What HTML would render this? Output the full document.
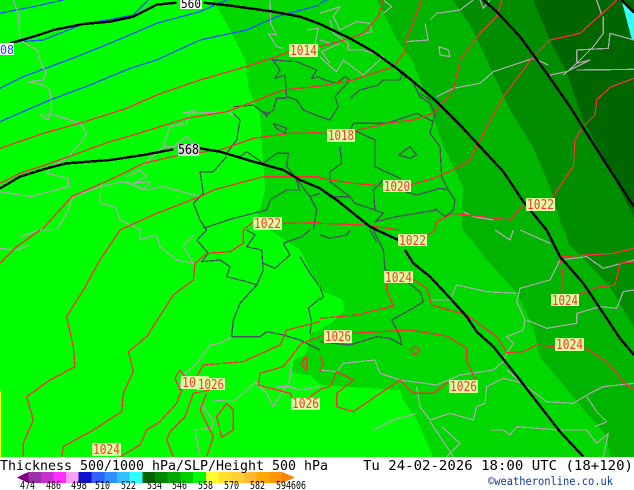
<!DOCTYPE html>
<html><head><meta charset="utf-8">
<style>
html,body{margin:0;padding:0;background:#fff}
svg{display:block;position:absolute;left:0;top:0}
.r,.b,.g,.d,.k{fill:none;vector-effect:non-scaling-stroke;stroke-linejoin:round}
.r{stroke:#ff2a3c;stroke-width:1.3}
.b{stroke:#1e50ff;stroke-width:1.3}
.g{stroke:#a8a8a8;stroke-width:1.3}
.d{stroke:#4a4f5c;stroke-width:1.3}
.k{stroke:#000;stroke-width:2.4}
text{font-family:"DejaVu Sans Mono","Liberation Mono",monospace}
.l{font-size:13px;fill:#ff3333}
</style></head>
<body>
<svg width="634" height="490" viewBox="0 0 634 490" xmlns="http://www.w3.org/2000/svg">
<rect width="634" height="490" fill="#fff"/>
<g shape-rendering="crispEdges">
<rect width="634" height="457" fill="#00ff00"/>
<path d="M0 14L15 11 45 0H0Z" fill="#00f000"/>
<path d="M213 0L230 30 245 60 249 90 260 115 263 160 265 190 258 215 270 230 300 250 320 290 343 300 344 310 335 320 320 330 310 333 308 345 305 355 294 360 292 372 305 375 310 375 320 385 400 390 403 400 417 420 433 457H634V0Z" fill="#00d800"/>
<path d="M377 0L397 40 412 60 427 97 442 143 463 187 462 227 463 230 487 260 517 293 533 327 540 357 570 393 607 437 610 457H634V0Z" fill="#00b400"/>
<path d="M453 0L473 30 490 67 510 110 533 147 550 187 562 227 565 230 568 243 610 287 634 327V0Z" fill="#008e00"/>
<path d="M533 0L550 40 567 73 583 120 610 170 634 217V0Z" fill="#006600"/>
<path d="M622 2L634 13V40H632Z" fill="#33ffff"/>
<rect x="0" y="391" width="1" height="66" fill="#ffff00"/>

<g transform="translate(0,0) scale(.33333)">
<path class="b" d="M0 40L100 20 190 0M60 125L130 120 250 72 350 55 400 45 445 0M0 265L70 230 230 170 330 130 470 70 600 35 680 0M0 365L150 300 270 255 390 205 470 180 600 120 740 90 830 50 960 15"/>
<path class="g" d="M40 0L55 40 60 120 110 150 130 205 140 215 130 240 85 245 130 255 150 270 155 320 145 360 120 345 165 345 240 370 260 400 240 430 205 470 150 505 140 520 205 535 205 560 150 575 90 590 0 575M220 590L200 640 170 690M220 590L300 560 370 545 440 570 490 560 600 590M300 580L300 610 345 620 360 660 425 690M430 495L490 440 510 380 560 370 570 340 680 335 700 345M550 338L585 332 580 340 550 340M380 530L420 510 440 530 400 550 450 545 430 570 380 545M490 440L520 440 560 410 590 440M810 0L812 70 830 105 805 100 830 140 850 145M920 90L955 85 945 130 960 150"/>
<path class="d" d="M815 175L840 210 825 235 855 225 860 290 890 300 910 330 960 350M815 180L890 185 950 210 935 235 960 230M700 320L760 315 800 345 820 330 830 295 860 295M700 340L720 360 710 420 680 460 720 470 740 455 790 490 830 460 865 460 860 500 885 530 900 570 860 570 810 600 800 630 760 640 700 655 610 685M600 515L640 515 680 470M600 515L610 580 580 610 600 660 620 690M820 370L860 385 855 400 830 385ZM790 335L805 340 800 350ZM885 530L930 590 960 580M930 590L950 630 940 690M760 655L775 665 770 690"/>
<path class="r" d="M0 445L130 400 245 368 380 325 470 285 600 240 745 198 815 175 870 155M0 550L60 520 150 490 330 425 400 405 560 355 680 335 760 305 850 270 960 258M125 690L215 590 350 530 430 490 540 465 660 450 760 415 870 400 960 398M360 690L470 640 600 590 640 570 790 530 960 530M730 690L760 665M845 670L960 668"/>
</g>

<g transform="translate(320,0) scale(.33333)">
<path class="b" d="M0 10L20 0"/>
<path class="g" d="M190 0L215 20 190 40M0 40L30 30 60 20 40 50 60 90 110 65 150 70 155 95 120 105M30 60L40 100 85 130 85 150 130 150 190 170 130 225 70 180 50 215 20 190 0 170M60 130L5 155 30 190M0 120L30 130M330 60L350 40 420 30 460 0M315 70L325 120 260 125M357 140L385 150 390 170 360 165ZM350 290L400 265 480 250 520 215 640 175 685 195M690 225L740 215 810 180 770 190 770 150 865 145 870 100 942 120M850 50L850 100 820 140 770 190 730 225M770 210L942 208M845 45L830 0M480 0L490 25 510 0M430 635L460 650 520 660"/>
<path class="d" d="M0 235L50 250 75 230 90 240 45 290 55 320 30 360 0 350M90 295L120 270 175 255 190 240 240 240 250 215 280 250 300 290 330 310 345 340 330 400 360 440 365 530 385 570 405 600 400 630 375 650 345 625M100 390L165 420 165 500 240 535 240 570 290 585 360 565 385 570M90 390L100 370 200 370 290 340 340 365M60 440L65 490 30 515 30 545 90 590 105 610 165 630 160 570 190 540M236 465L270 440 290 465 270 475ZM240 220L265 230 250 235M0 565L30 590 90 590M165 630L190 640 165 665 230 650 350 630M300 280L330 300"/>
<path class="r" d="M0 140L90 115 130 100 175 50 190 0M0 258L100 240 220 200 255 155 258 125 290 40 305 0M0 400L20 400M105 392L200 370 280 360 340 340 400 270 420 180 480 100 530 50 545 0M0 535L100 550 190 558M270 555L340 535 410 505 450 480 500 380 550 290 640 170 690 120 780 100 880 10 890 0M0 670L130 675 240 690M345 690L350 665 400 640 570 660 620 605M695 595L760 500 765 420 790 380 825 345 830 300 870 262 942 235"/>
<path class="k" d="M0 72L90 115 160 155 230 205 280 245 350 305 420 375 485 445 550 515 610 605 680 690M0 565L50 600 150 680 170 690M490 0L530 35 600 110 680 220 750 320 800 400 870 510 942 620M905 0L942 38"/>
</g>

<g transform="translate(0,230) scale(.33333)">
<path class="g" d="M0 55L50 60 90 45M60 20L120 0 160 0M50 60L0 55M420 0L420 30 470 15 480 50 530 90 580 100 550 50 580 15M700 320L660 340 630 345 590 400 545 440 540 475M640 510L700 515 770 455M875 390L870 450 820 530 800 490 770 460M600 520L640 570 635 595 585 600 600 680M830 470L870 470 900 480 960 470"/>
<path class="d" d="M590 30L620 0M590 30L625 70 605 95 660 90 690 110 680 140 740 155 770 165 790 120 785 60 740 50 765 15 740 0M770 165L720 220 700 270 695 320 780 320 800 305 850 315 900 330 960 360M790 100L825 115 870 75 850 40 905 20 930 0M900 80L930 130 955 165M960 205L925 235 935 275 930 310"/>
<path class="r" d="M0 100L50 50 120 0M360 0L300 90 250 180 200 260 220 350 225 410 150 450 80 500 100 570 70 640 70 680M730 0L730 40 690 65 620 70 585 100 580 150 520 195 440 320 385 365 400 425 370 490 365 545 280 600 190 650 185 680M525 445L540 420 555 440 560 470 540 480ZM545 480L530 520 480 575 440 600 420 645 360 680M960 275L860 300 840 345 730 395 610 405 590 440M630 480L580 490 555 560 510 605 500 630 520 680M620 490L600 540 640 620 620 680M680 520L700 540 700 600 665 622 650 560ZM910 390L920 380 920 420 905 405ZM960 320L905 340 850 410 780 430 775 465 870 490 880 510M960 480L930 500"/>
</g>

<g transform="translate(320,230) scale(.33333)">
<path class="g" d="M50 425L70 400 165 390 180 430 240 450 350 465 420 435 520 420 550 395 560 370 580 340 560 320 610 300 615 270 590 215 600 175 690 150 720 90 800 80 850 115 942 90M330 210L390 210 410 165 500 185 590 190M620 270L680 295 770 280 770 250 840 230 890 235 910 185 942 180M560 420L620 470 680 515 760 520 810 490 850 470 942 460M290 470L300 530 330 570 390 550 460 570 470 530 495 520 500 470 550 445 610 460M510 600L550 600 570 615 590 590 720 600 800 600 830 640 865 610 850 680M160 600L220 570 290 550M800 500L830 545 860 575 825 590M330 575L360 620 400 680M525 0L570 30 580 0M600 0L690 40M0 420L50 425M365 590L420 640 380 680"/>
<path class="d" d="M0 170L10 200 0 210M160 0L190 60 195 120 240 140 300 185 310 215 270 240 215 270 240 320 245 345 210 325 170 320 90 345 40 340 0 335M0 15L30 25 80 15 90 0M150 0L170 35"/>
<path class="r" d="M0 265L110 255 220 228 200 180 200 130M280 148L320 175 335 225 440 255 530 320 560 368 610 365 650 345 705 350M790 350L860 395 920 465 942 480M0 318L12 318M95 310L270 300 380 318 440 355 440 390 465 450M0 478L30 470 50 425 100 450 50 490 50 530 100 545 240 450 280 490 340 490 385 455M0 380L10 400 0 425M725 80L800 75 880 70 942 55M720 85L730 140 730 195M775 195L830 172 885 165 900 100 942 95M320 20L345 0"/>
<circle class="r" cx="285" cy="362" r="11"/>
<path class="k" d="M170 0L235 30M255 60L280 100 330 140 400 215 440 260 470 305 520 350 600 450 650 515 720 605 790 680M680 0L720 80 790 160 840 235 900 325 942 375"/>
</g>
<g transform="translate(0,0) scale(.33333)">
<path class="k" d="M30 130L100 110 160 90 250 72 330 65 400 50 470 14 530 8M610 8L700 18 820 35 900 50 960 72M0 565L60 530 140 505 200 490 330 480 430 465 520 448M600 445L660 455 760 485 850 510 900 540 960 565"/>
</g>

<rect x="180" y="0" width="22" height="9" fill="#fff"/>
<rect x="178" y="144" width="21" height="12" fill="#d8d8d8"/>
<rect x="0" y="43" width="14" height="12" fill="#fff"/>
<g fill="#d8ffa0">
<rect x="289" y="44" width="29" height="13"/>
<rect x="327" y="129" width="28" height="13"/>
<rect x="383" y="180" width="28" height="12"/>
<rect x="526" y="198" width="29" height="13"/>
<rect x="253" y="217" width="29" height="13"/>
<rect x="398" y="234" width="29" height="12"/>
<rect x="384" y="271" width="29" height="12"/>
<rect x="551" y="294" width="28" height="12"/>
<rect x="324" y="330" width="28" height="13"/>
<rect x="555" y="338" width="29" height="13"/>
<rect x="181" y="376" width="28" height="13"/>
<rect x="197" y="378" width="28" height="12"/>
<rect x="291" y="398" width="29" height="12"/>
<rect x="449" y="380" width="29" height="13"/>
<rect x="92" y="443" width="29" height="13"/>
</g>

<path d="M17 477.5L28.3 472V483Z" fill="#800080"/>
<rect x="28.3" y="472" width="13" height="11" fill="#9b30a8"/>
<rect x="41" y="472" width="13" height="11" fill="#c530cc"/>
<rect x="53.5" y="472" width="13" height="11" fill="#ff30ff"/>
<rect x="66" y="472" width="13" height="11" fill="#ffa0ff"/>
<rect x="78.7" y="472" width="13" height="11" fill="#1010d0"/>
<rect x="91.7" y="472" width="13" height="11" fill="#3060ff"/>
<rect x="104.3" y="472" width="13" height="11" fill="#3090ff"/>
<rect x="117" y="472" width="13" height="11" fill="#30c0ff"/>
<rect x="129.7" y="472" width="13" height="11" fill="#30ffff"/>
<rect x="142.3" y="472" width="13" height="11" fill="#006400"/>
<rect x="155" y="472" width="13" height="11" fill="#008800"/>
<rect x="167.7" y="472" width="13" height="11" fill="#00a800"/>
<rect x="180.3" y="472" width="13" height="11" fill="#00d000"/>
<rect x="193" y="472" width="13" height="11" fill="#00ff00"/>
<rect x="206" y="472" width="13" height="11" fill="#ffff30"/>
<rect x="218.7" y="472" width="13" height="11" fill="#ffe030"/>
<rect x="231.3" y="472" width="13" height="11" fill="#ffd030"/>
<rect x="244" y="472" width="13" height="11" fill="#ffb830"/>
<rect x="256.7" y="472" width="13" height="11" fill="#ffa800"/>
<rect x="269.3" y="472" width="13" height="11" fill="#ff9800"/>
<path d="M282 472L295 477.5 282 483Z" fill="#ff8000"/>
</g>

<text x="181" y="8" font-size="12" fill="#000" textLength="20" lengthAdjust="spacingAndGlyphs">560</text>
<text x="178" y="154" font-size="13" fill="#000" textLength="21" lengthAdjust="spacingAndGlyphs">568</text>
<text x="0" y="54" font-size="12" fill="#2244ff" textLength="14" lengthAdjust="spacingAndGlyphs">08</text>
<g class="l">
<text class="l" x="290" y="55" textLength="27" lengthAdjust="spacingAndGlyphs">1014</text>
<text class="l" x="328" y="140" textLength="26" lengthAdjust="spacingAndGlyphs">1018</text>
<text class="l" x="384" y="191" textLength="26" lengthAdjust="spacingAndGlyphs">1020</text>
<text class="l" x="527" y="209" textLength="27" lengthAdjust="spacingAndGlyphs">1022</text>
<text class="l" x="254" y="228" textLength="27" lengthAdjust="spacingAndGlyphs">1022</text>
<text class="l" x="399" y="245" textLength="27" lengthAdjust="spacingAndGlyphs">1022</text>
<text class="l" x="385" y="282" textLength="27" lengthAdjust="spacingAndGlyphs">1024</text>
<text class="l" x="552" y="305" textLength="26" lengthAdjust="spacingAndGlyphs">1024</text>
<text class="l" x="325" y="341" textLength="26" lengthAdjust="spacingAndGlyphs">1026</text>
<text class="l" x="556" y="349" textLength="27" lengthAdjust="spacingAndGlyphs">1024</text>
<text class="l" x="182" y="387" textLength="14" lengthAdjust="spacingAndGlyphs">10</text>
<text class="l" x="198" y="389" textLength="26" lengthAdjust="spacingAndGlyphs">1026</text>
<text class="l" x="292" y="408" textLength="27" lengthAdjust="spacingAndGlyphs">1026</text>
<text class="l" x="450" y="391" textLength="27" lengthAdjust="spacingAndGlyphs">1026</text>
<text class="l" x="93" y="454" textLength="27" lengthAdjust="spacingAndGlyphs">1024</text>
</g>

<text x="0" y="470" font-size="13.5" fill="#000" textLength="328" lengthAdjust="spacingAndGlyphs">Thickness 500/1000 hPa/SLP/Height 500 hPa</text>
<text x="363" y="470" font-size="13.5" fill="#000" textLength="270" lengthAdjust="spacingAndGlyphs">Tu 24-02-2026 18:00 UTC (18+120)</text>
<text x="488" y="485" font-size="11.5" fill="#0a3a9a" textLength="125" lengthAdjust="spacingAndGlyphs">©weatheronline.co.uk</text>
<g font-size="10.5" fill="#000">
<text x="20" y="489" textLength="15" lengthAdjust="spacingAndGlyphs">474</text>
<text x="46" y="489" textLength="15" lengthAdjust="spacingAndGlyphs">486</text>
<text x="71" y="489" textLength="16" lengthAdjust="spacingAndGlyphs">498</text>
<text x="95" y="489" textLength="15" lengthAdjust="spacingAndGlyphs">510</text>
<text x="121" y="489" textLength="15" lengthAdjust="spacingAndGlyphs">522</text>
<text x="147" y="489" textLength="15" lengthAdjust="spacingAndGlyphs">534</text>
<text x="172" y="489" textLength="15" lengthAdjust="spacingAndGlyphs">546</text>
<text x="198" y="489" textLength="15" lengthAdjust="spacingAndGlyphs">558</text>
<text x="224" y="489" textLength="15" lengthAdjust="spacingAndGlyphs">570</text>
<text x="250" y="489" textLength="15" lengthAdjust="spacingAndGlyphs">582</text>
<text x="276" y="489" textLength="15" lengthAdjust="spacingAndGlyphs">594</text>
<text x="291" y="489" textLength="15" lengthAdjust="spacingAndGlyphs">606</text>
</g>
</svg>
</body></html>
